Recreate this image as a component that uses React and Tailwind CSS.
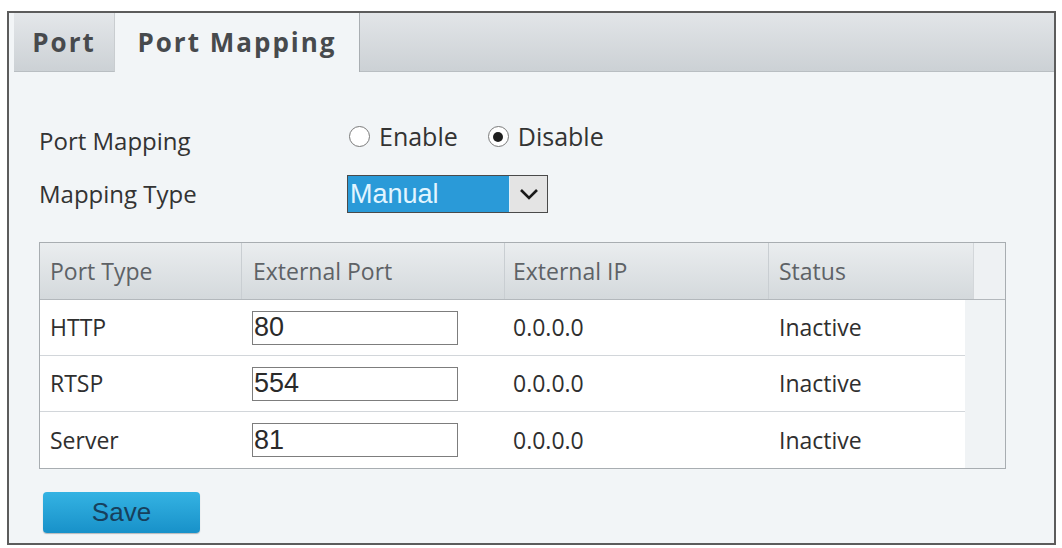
import React, { useState } from "react";

const rows = [
  { type: "HTTP", port: "80" },
  { type: "RTSP", port: "554" },
  { type: "Server", port: "81" },
];

function Radio({ checked, label, onClick }) {
  return (
    <label onClick={onClick} className="flex items-center gap-[9px] cursor-pointer">
      <span className="w-[21px] h-[21px] rounded-full border border-[#7a7a7a] bg-white flex items-center justify-center">
        {checked && <span className="w-[10px] h-[10px] rounded-full bg-[#1f1f1f]" />}
      </span>
      <span>{label}</span>
    </label>
  );
}

export default function App() {
  const [enabled, setEnabled] = useState(false);
  const [ports, setPorts] = useState(rows.map((r) => r.port));

  return (
    <div className="w-[1062px] h-[548px] bg-white pt-[11px] pl-[7px]" style={{ fontFamily: '"Open Sans", "Noto Sans", sans-serif' }}>
      <div className="w-[1049px] h-[534px] border-2 border-[#5c5c5c] bg-[#f2f5f7] flex flex-col">
        {/* Tabs */}
        <div className="h-[59px] flex pl-[5px] bg-[#f2f5f7]">
          <div className="w-[101px] flex items-center justify-center bg-gradient-to-b from-[#e4e7ea] to-[#ccd1d5] border-b border-[#b9bec2] border-r border-r-[#c9cdd0] text-[26px] font-bold tracking-[2px] text-[#474a4d]">
            Port
          </div>
          <div className="w-[245px] flex items-center justify-center bg-[#f2f5f7] border-r border-[#a9aeb2] text-[26px] font-bold tracking-[2px] text-[#474a4d]">
            Port Mapping
          </div>
          <div className="flex-1 bg-gradient-to-b from-[#e2e5e8] to-[#ccd1d5] border-b border-[#b9bec2]" />
        </div>

        {/* Form */}
        <div className="pl-[30px] pt-[48px] text-[#333] text-[24px]">
          <div className="h-[40px] flex items-center">
            <div className="w-[310px] pt-[2px]">Port Mapping</div>
            <div className="flex items-center gap-[30px] text-[25px] -mt-[7px]">
              <Radio checked={enabled} label="Enable" onClick={() => setEnabled(true)} />
              <Radio checked={!enabled} label="Disable" onClick={() => setEnabled(false)} />
            </div>
          </div>

          <div className="h-[38px] mt-[15px] flex items-center">
            <div className="w-[308px]">Mapping Type</div>
            <div className="w-[201px] h-[38px] border border-[#4a4a4a] flex">
              <div className="flex-1 bg-[#2a9ad8] text-[#e2f5ff] text-[27px] pl-[2px] flex items-center border-r border-[#dff0fa]" style={{ fontFamily: '"Liberation Sans", Arial, sans-serif' }}>
                Manual
              </div>
              <div className="w-[37px] bg-[#e4e4e4] flex items-center justify-center">
                <svg width="20" height="12" viewBox="0 0 20 12" fill="none">
                  <path d="M2 2 L10 10 L18 2" stroke="#1a1a1a" strokeWidth="2.6" />
                </svg>
              </div>
            </div>
          </div>

          {/* Table */}
          <div className="mt-[29px] w-[967px] border border-[#a8adb1] bg-[#f0f3f5]">
            <div className="h-[57px] flex text-[23px] text-[#5e6266] bg-gradient-to-b from-[#eaedef] to-[#d4d9dc] border-b border-[#b3b8bc]">
              <div className="w-[202px] pl-[10px] flex items-center border-r border-[#c9ced2]">Port Type</div>
              <div className="w-[263px] pl-[11px] flex items-center border-r border-[#c9ced2]">External Port</div>
              <div className="w-[264px] pl-[8px] flex items-center border-r border-[#c9ced2]">External IP</div>
              <div className="w-[204px] pl-[10px] flex items-center">Status</div>
              <div className="flex-1 bg-[#eef1f3] border-l border-[#d3d7da]" />
            </div>
            {rows.map((r, i) => (
              <div key={r.type} className="flex h-[56px]">
                <div className={`w-[925px] bg-white flex items-center text-[23px] text-[#2f2f2f] ${i < rows.length - 1 ? "border-b border-[#d2d6da]" : ""}`}>
                  <div className="w-[202px] pl-[10px]">{r.type}</div>
                  <div className="w-[263px] pl-[10px]">
                    <input
                      value={ports[i]}
                      onChange={(e) => setPorts(ports.map((p, j) => (j === i ? e.target.value : p)))}
                      className="w-[206px] h-[34px] border border-[#7d7d7d] bg-white px-[1px] text-[27px] text-[#2a2a2a] outline-none"
                      style={{ fontFamily: '"Liberation Sans", Arial, sans-serif' }}
                    />
                  </div>
                  <div className="w-[264px] pl-[8px]">0.0.0.0</div>
                  <div className="pl-[10px]">Inactive</div>
                </div>
                <div className="flex-1" />
              </div>
            ))}
          </div>

          <button
            type="button"
            className="mt-[23px] ml-[4px] w-[157px] h-[41px] rounded-[4px] bg-gradient-to-b from-[#34b3e3] to-[#1791c9] text-[#173f5c] text-[26px] shadow-[0_1px_1px_rgba(0,0,0,0.25)]"
            style={{ fontFamily: '"Liberation Sans", Arial, sans-serif' }}
          >
            Save
          </button>
        </div>
      </div>
    </div>
  );
}
